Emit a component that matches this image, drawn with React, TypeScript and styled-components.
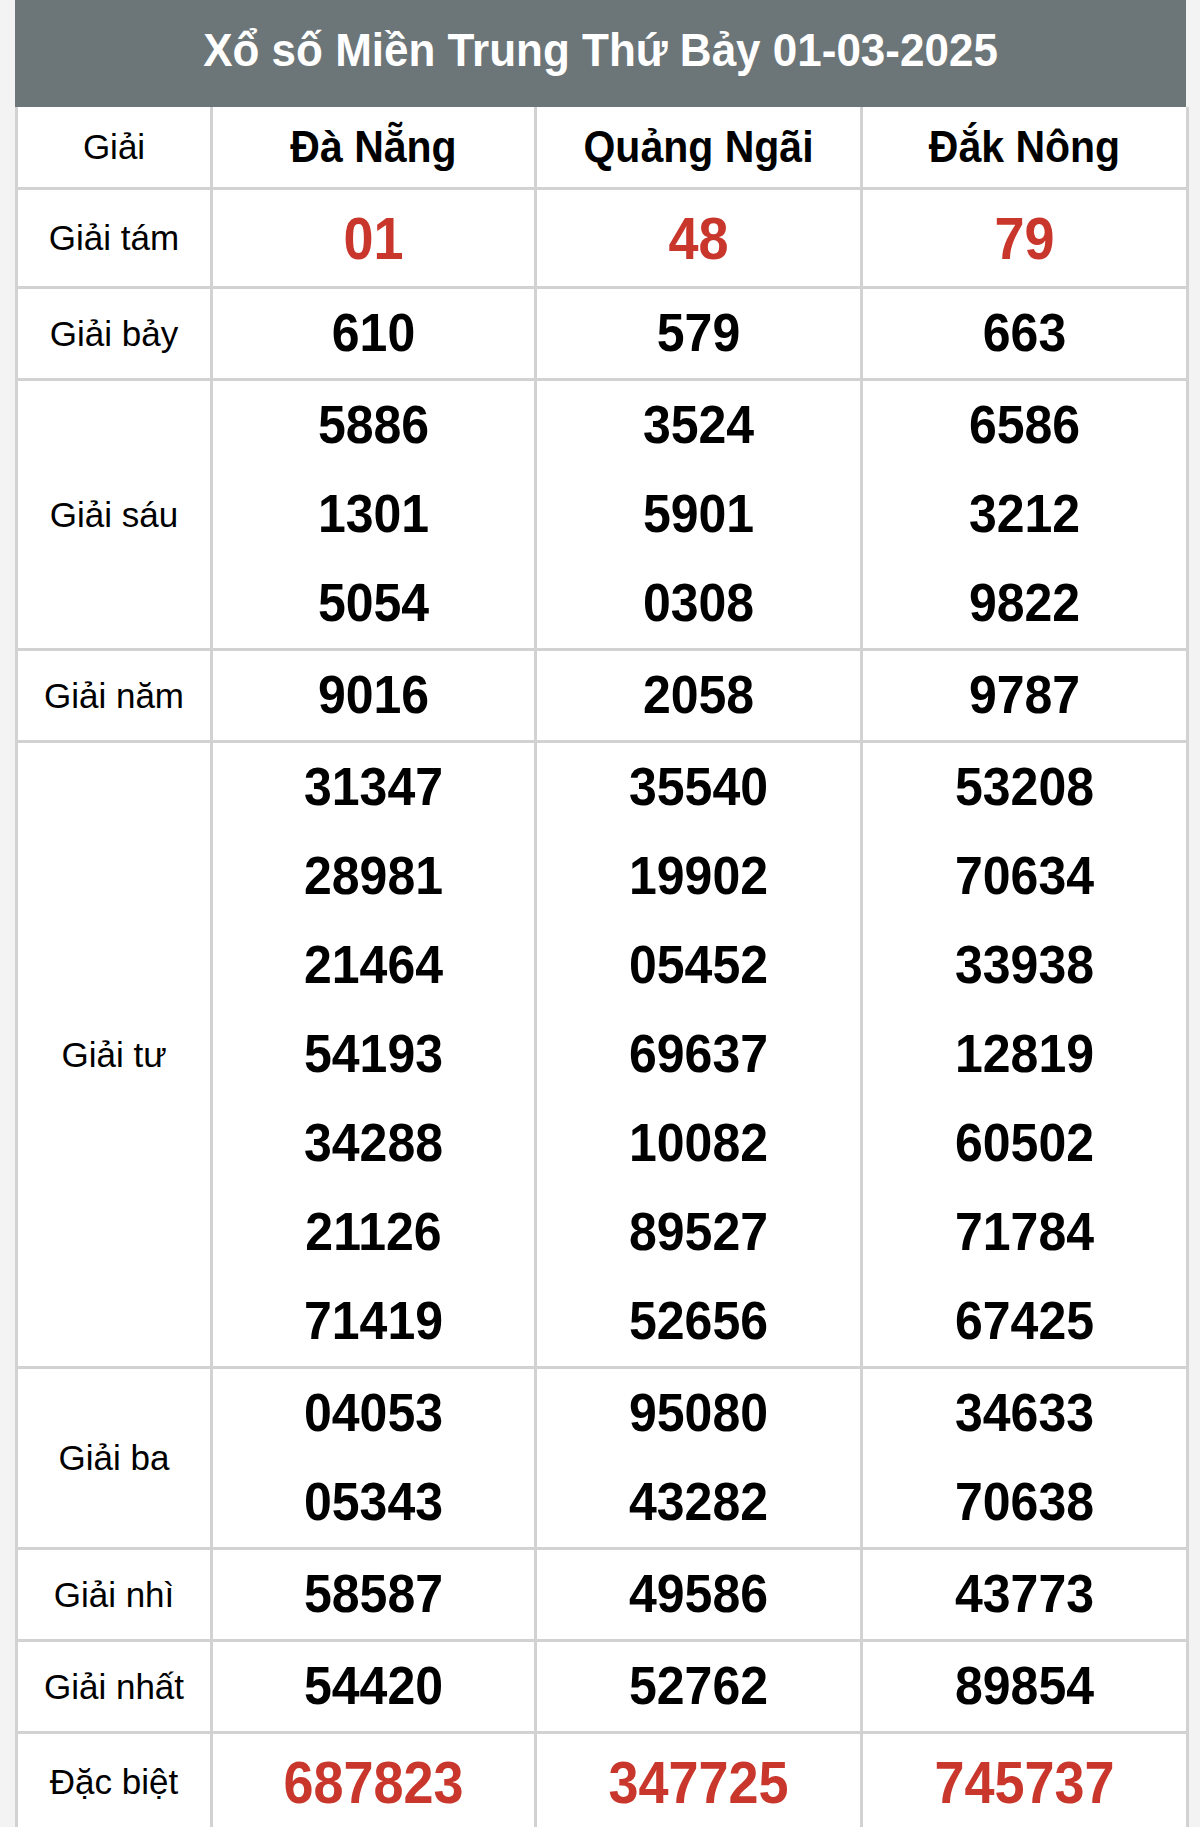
import React from "react";
import styled, { createGlobalStyle } from "styled-components";

const GlobalStyle = createGlobalStyle`
  html, body {
    margin: 0;
    padding: 0;
    background: #f3f3f3;
  }
  body {
    font-family: "Liberation Sans", Arial, sans-serif;
  }
`;

const Page = styled.div`
  padding: 0 14px 0 15px;
`;

const Card = styled.div`
  width: 1171px;
  background: #fff;
`;

const Title = styled.h1`
  margin: 0;
  height: 107px;
  box-sizing: border-box;
  padding-bottom: 8px;
  background: #6c7578;
  color: #fff;
  font-size: 44px;
  font-weight: 700;
  display: flex;
  align-items: center;
  justify-content: center;
`;

const Stretch = styled.span`
  display: inline-block;
  transform: scaleY(1.07);
`;

const Table = styled.table`
  width: 1171px;
  border-collapse: collapse;
  table-layout: fixed;
  background: #fff;
`;

const Cell = styled.td<{ $head?: boolean; $label?: boolean; $tall?: boolean }>`
  border: 3px solid #d2d2d2;
  border-top-width: ${(p) => (p.$head ? 0 : 3)}px;
  padding: 0;
  text-align: center;
  vertical-align: middle;
  color: #000;
  height: ${(p) => (p.$head ? 80 : p.$tall ? 96 : 89)}px;
  font-size: ${(p) => (p.$label ? 35 : p.$head ? 41 : 50)}px;
  font-weight: ${(p) => (p.$label ? 400 : 700)};
`;

const Num = styled.div<{ $red?: boolean; $big?: boolean }>`
  line-height: ${(p) => (p.$big ? 96 : 89)}px;
  font-size: ${(p) => (p.$red ? 54 : 50)}px;
  font-weight: 700;
  color: ${(p) => (p.$red ? "#c9372c" : "#000")};
  transform: scaleY(1.08);
`;

type Row = { label: string; values: string[][]; red?: boolean; tall?: boolean };

const rows: Row[] = [
  { label: "Giải tám", values: [["01"], ["48"], ["79"]], red: true, tall: true },
  { label: "Giải bảy", values: [["610"], ["579"], ["663"]] },
  {
    label: "Giải sáu",
    values: [
      ["5886", "1301", "5054"],
      ["3524", "5901", "0308"],
      ["6586", "3212", "9822"],
    ],
  },
  { label: "Giải năm", values: [["9016"], ["2058"], ["9787"]] },
  {
    label: "Giải tư",
    values: [
      ["31347", "28981", "21464", "54193", "34288", "21126", "71419"],
      ["35540", "19902", "05452", "69637", "10082", "89527", "52656"],
      ["53208", "70634", "33938", "12819", "60502", "71784", "67425"],
    ],
  },
  {
    label: "Giải ba",
    values: [
      ["04053", "05343"],
      ["95080", "43282"],
      ["34633", "70638"],
    ],
  },
  { label: "Giải nhì", values: [["58587"], ["49586"], ["43773"]] },
  { label: "Giải nhất", values: [["54420"], ["52762"], ["89854"]] },
  { label: "Đặc biệt", values: [["687823"], ["347725"], ["745737"]], red: true, tall: true },
];

const provinces = ["Đà Nẵng", "Quảng Ngãi", "Đắk Nông"];

export default function App() {
  return (
    <>
      <GlobalStyle />
      <Page>
        <Card>
          <Title>
            <Stretch>Xổ số Miền Trung Thứ Bảy 01-03-2025</Stretch>
          </Title>
          <Table>
            <colgroup>
              <col style={{ width: 195 }} />
              <col style={{ width: 324 }} />
              <col style={{ width: 326 }} />
              <col style={{ width: 326 }} />
            </colgroup>
            <tbody>
              <tr>
                <Cell $head $label>
                  Giải
                </Cell>
                {provinces.map((p) => (
                  <Cell key={p} $head>
                    <Stretch>{p}</Stretch>
                  </Cell>
                ))}
              </tr>
              {rows.map((r) => (
                <tr key={r.label}>
                  <Cell $label $tall={r.tall}>
                    {r.label}
                  </Cell>
                  {r.values.map((col, i) => (
                    <Cell key={i} $tall={r.tall}>
                      {col.map((n, j) => (
                        <Num key={j} $red={r.red} $big={r.tall}>
                          {n}
                        </Num>
                      ))}
                    </Cell>
                  ))}
                </tr>
              ))}
            </tbody>
          </Table>
        </Card>
      </Page>
    </>
  );
}
